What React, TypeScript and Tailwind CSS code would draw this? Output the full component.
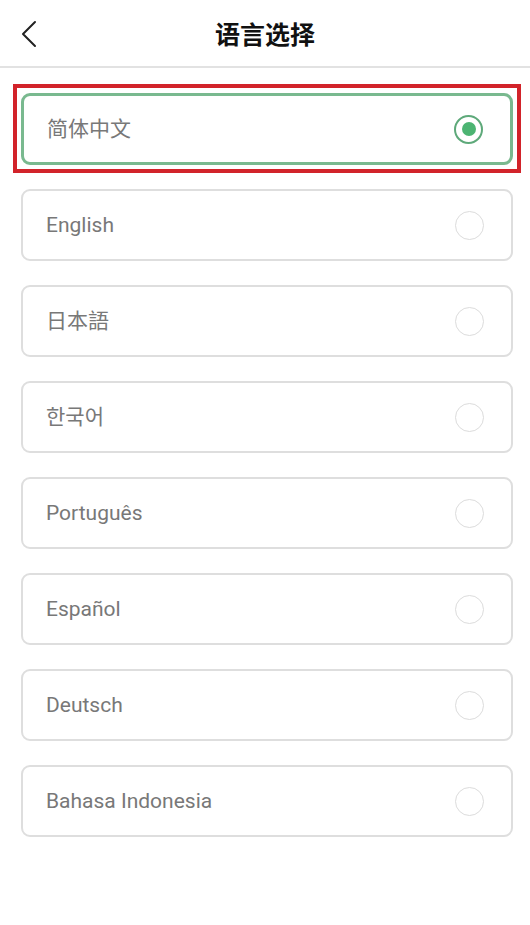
import React from "react";

const langs = [
  "简体中文",
  "English",
  "日本語",
  "한국어",
  "Português",
  "Español",
  "Deutsch",
  "Bahasa Indonesia",
];

export default function App() {
  return (
    <div
      className="w-[530px] h-[925px] bg-white"
      style={{ fontFamily: 'Roboto, "Noto Sans CJK SC", "Noto Sans CJK KR", sans-serif' }}
    >
      <div className="relative h-[68px] flex items-center justify-center border-b-2 border-[#e2e2e2]">
        <svg
          className="absolute left-[20px] top-[20px]"
          width="18"
          height="28"
          viewBox="0 0 18 28"
          fill="none"
        >
          <path d="M15 2 L3 14 L15 26" stroke="#222" strokeWidth="2" strokeLinecap="round" strokeLinejoin="round" />
        </svg>
        <span
          className="text-[25px] font-bold text-[#111] leading-none"
          style={{ fontFamily: '"Noto Sans CJK SC", sans-serif' }}
        >
          语言选择
        </span>
      </div>
      <div className="flex flex-col gap-[24px] pl-[21px] pr-[17px] pt-[25px]">
        {langs.map((l, i) => {
          const sel = i === 0;
          return (
            <div key={l} className="relative">
              {sel && (
                <div className="absolute -left-[8px] -right-[8px] -top-[9px] -bottom-[8px] border-[4px] border-[#d2232a] pointer-events-none" />
              )}
              <div
                className={
                  "h-[72px] rounded-[9px] flex items-center justify-between pl-[23px] pr-[27px] " +
                  (sel ? "border-[3px] border-[#79b98f]" : "border-2 border-[#dedede]")
                }
              >
                <span className="text-[21px] text-[#787878] pt-[2px]">{l}</span>
                {sel ? (
                  <div className="w-[29px] h-[29px] rounded-full border-2 border-[#5ea97a] flex items-center justify-center">
                    <div className="w-[14px] h-[14px] rounded-full bg-[#4cb472]" />
                  </div>
                ) : (
                  <div className="w-[29px] h-[29px] rounded-full border-[1.5px] border-[#dcdcdc]" />
                )}
              </div>
            </div>
          );
        })}
      </div>
    </div>
  );
}
